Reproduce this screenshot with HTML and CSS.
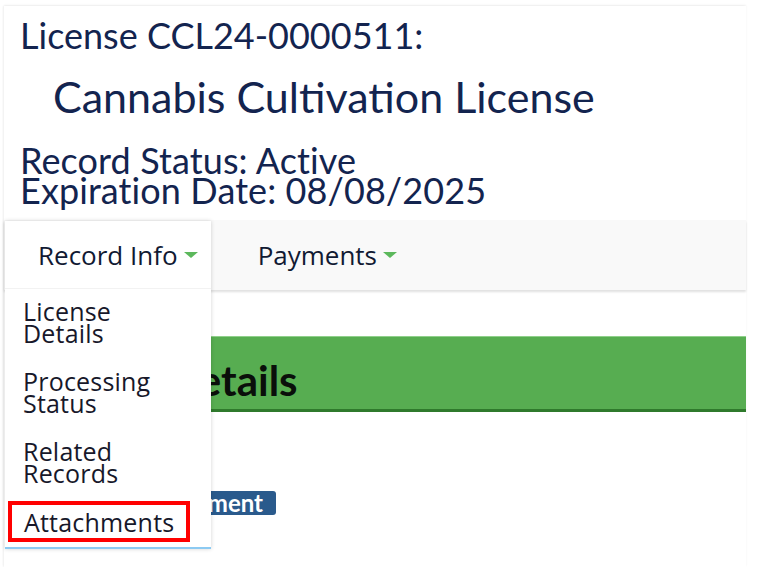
FILE: index.html
```html
<!DOCTYPE html>
<html>
<head>
<meta charset="utf-8">
<link rel="stylesheet" href="styles.css">
</head>
<body>
<div class="card">
  <div class="head">
    <div class="title">License CCL24-0000511:</div>
    <div class="subtitle">Cannabis Cultivation License</div>
    <div class="status">Record Status: Active<br>Expiration Date: 08/08/2025</div>
  </div>
  <div class="nav">
    <div class="tab">Record Info <span class="caret"></span></div>
    <div class="tab">Payments <span class="caret"></span></div>
  </div>
  <div class="content">
    <div class="section">Record Details</div>
    <div class="badges"><span class="badge">Amendment</span></div>
  </div>

  <div class="dropdown">
    <div class="dd-head">Record Info <span class="caret"></span></div>
    <ul class="dd-list">
      <li>License<br>Details</li>
      <li>Processing<br>Status</li>
      <li>Related<br>Records</li>
      <li class="hl">Attachments</li>
    </ul>
  </div>
</div>
</body>
</html>
```
FILE: styles.css
```css
html, body {
  margin: 0;
  padding: 0;
  background: #ffffff;
}
body {
  font-family: Lato, "Open Sans", sans-serif;
  width: 764px;
  height: 567px;
  overflow: hidden;
}
.card {
  position: relative;
  margin: 6px 18px 0 4px;
  background: #fff;
  box-shadow: 0 -1px 2px rgba(0,0,0,0.06), -1px 0 2px rgba(0,0,0,0.05);
  height: 561px;
}
.head {
  color: #13244f;
  padding: 11px 0 0 16px;
}
.title {
  font-size: 36px;
  line-height: 36px;
}
.subtitle {
  font-size: 43px;
  line-height: 44px;
  margin: 22px 0 0 33px;
}
.status {
  margin-top: 26px;
  font-size: 36px;
  line-height: 30px;
  letter-spacing: 0.1px;
}
.nav {
  margin-top: 15px;
  height: 70px;
  background: #f9f9f9;
  box-shadow: 0 2px 2px rgba(0,0,0,0.12);
  display: flex;
  align-items: center;
  padding-left: 34px;
  gap: 60px;
  font-family: "Open Sans", sans-serif;
  font-size: 26px;
  color: #111a33;
}
.tab {
  display: flex;
  align-items: center;
  gap: 6px;
}
.caret {
  display: inline-block;
  width: 0;
  height: 0;
  border-left: 7px solid transparent;
  border-right: 7px solid transparent;
  border-top: 6px solid #5cb85c;
  margin-left: 0;
}
.content {
  padding: 46px 0 0 16px;
}
.section {
  box-sizing: border-box;
  height: 76px;
  background: #57ad51;
  border-top: 1px solid #8fd08a;
  border-bottom: 3px solid #2f7a2c;
  font-family: Lato, sans-serif;
  font-weight: 700;
  font-size: 42px;
  line-height: 86px;
  padding-left: 6px;
  color: #0a0f0a;
}
.badges {
  margin-top: 79px;
  width: 256px;
  text-align: right;
}
.badge {
  display: inline-block;
  background: #2a5a8c;
  color: #fff;
  font-weight: 700;
  font-size: 24px;
  line-height: 24px;
  padding: 0 13px 0 10px;
  border-radius: 3px;
}
.dropdown {
  position: absolute;
  left: 1px;
  top: 215px;
  width: 206px;
  height: 326px;
  background: #fff;
  box-shadow: 0 0 4px rgba(0,0,0,0.18);
  border-bottom: 2px solid #8ccaf2;
}
.dd-head {
  height: 67px;
  display: flex;
  align-items: center;
  padding-left: 33px;
  gap: 6px;
  border-bottom: 1px solid #f2f2f2;
  font-family: "Open Sans", sans-serif;
  font-size: 26px;
  color: #111a33;
}
.dd-list {
  list-style: none;
  margin: 0;
  padding: 11px 0 0 0;
  font-family: "Open Sans", sans-serif;
}
.dd-list li {
  font-size: 25px;
  line-height: 22px;
  color: #17182a;
  padding: 0 0 26px 18px;
  letter-spacing: 0.2px;
}
.dd-list li.hl {
  box-sizing: border-box;
  margin: -9px 0 0 3px;
  padding: 6px 0 0 12px;
  width: 182px;
  height: 41px;
  border: 4px solid #ff0000;
}
```
